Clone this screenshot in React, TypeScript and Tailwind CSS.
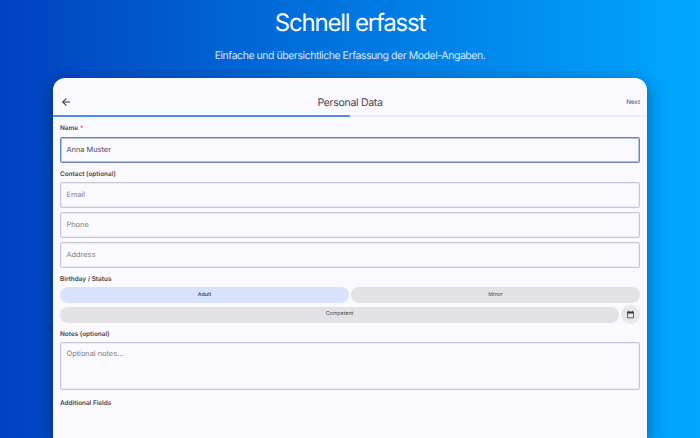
function FieldLabel({ children }: { children: React.ReactNode }) {
    return (
        <div className="h-[8px] pt-[1px] flex items-center text-[6.4px] leading-none font-semibold text-[#44464f]">
            {children}
        </div>
    );
}

function TextBox({ placeholder }: { placeholder: string }) {
    return (
        <div className="h-[26px] flex items-center px-[5.5px] rounded-[2px] border border-[#c8c8d0] shadow-[inset_0_0_0_1px_#ecebf1] text-[7.4px] text-[#7b7c85]">
            {placeholder}
        </div>
    );
}

export default function App() {
    return (
        <div className="h-[438px] w-[700px] overflow-hidden flex flex-col items-center bg-gradient-to-r from-[#0040c0] to-[#00a8ff] font-['Inter',sans-serif] antialiased [text-rendering:geometricPrecision]">
            <h1 className="mt-[8px] h-[30px] leading-[30px] text-[24px] font-normal tracking-[-1.2px] text-white">
                Schnell erfasst
            </h1>
            <p className="mt-[10px] h-[15px] leading-[15px] text-[10.5px] tracking-[-0.45px] text-[#d5e6fb]">
                Einfache und übersichtliche Erfassung der Model-Angaben.
            </p>
            <div className="mt-[15px] w-[594px] flex-1 rounded-t-[12px] bg-[#faf9ff] shadow-[0_4px_16px_rgba(0,0,0,0.4)]">
                <div className="h-[37px] flex items-center justify-between px-[7px] pt-[11px]">
                    <div className="w-[40px]">
                        <svg viewBox="0 0 24 24" className="h-[12px] w-[12px]" fill="#33343a">
                            <path d="M20 11H7.83l5.59-5.59L12 4l-8 8 8 8 1.41-1.41L7.83 13H20v-2z" />
                        </svg>
                    </div>
                    <span className="pt-[1px] text-[10.5px] tracking-[-0.3px] text-[#44464f]">Personal Data</span>
                    <span className="w-[40px] pt-[1px] text-right text-[6.2px] font-medium text-[#55658f]">Next</span>
                </div>
                <div className="h-[2px] bg-[#eeedf3]">
                    <div className="h-full w-1/2 bg-[#4a90ec]" />
                </div>
                <div className="px-[7px] pt-[7px] flex flex-col">
                    <FieldLabel>
                        Name <span className="ml-[2px] text-[#e05a5a]">*</span>
                    </FieldLabel>
                    <div className="mt-[5px] h-[26px] flex items-center px-[5.5px] rounded-[2px] border border-[#6f86b8] shadow-[inset_0_0_0_1px_#b4c0dc] text-[7.4px] text-[#44464f]">
                        Anna Muster
                    </div>
                    <div className="mt-[7px]">
                        <FieldLabel>Contact (optional)</FieldLabel>
                    </div>
                    <div className="mt-[4px] flex flex-col gap-[4px]">
                        <TextBox placeholder="Email" />
                        <TextBox placeholder="Phone" />
                        <TextBox placeholder="Address" />
                    </div>
                    <div className="mt-[7px]">
                        <FieldLabel>Birthday / Status</FieldLabel>
                    </div>
                    <div className="mt-[4px] flex gap-[2px]">
                        <div className="flex-1 h-[16px] pt-[2px] rounded-full bg-[#d8e2fc] flex items-center justify-center text-[5.3px] font-medium text-[#2a3a66]">
                            Adult
                        </div>
                        <div className="flex-1 h-[16px] pt-[2px] rounded-full bg-[#e2e2e6] flex items-center justify-center text-[5.3px] text-[#44464f]">
                            Minor
                        </div>
                    </div>
                    <div className="mt-[2px] flex items-center gap-[2px]">
                        <div className="flex-1 h-[16px] pt-[1px] rounded-full bg-[#e2e2e6] flex items-center justify-center text-[5.3px] text-[#44464f]">
                            Competent
                        </div>
                        <div className="h-[19px] w-[19px] rounded-full bg-[#e8e8ec] flex items-center justify-center">
                            <svg viewBox="0 0 24 24" className="h-[9px] w-[9px]" fill="#33343a">
                                <path d="M19 4h-1V2h-2v2H8V2H6v2H5a2 2 0 0 0-2 2v14a2 2 0 0 0 2 2h14a2 2 0 0 0 2-2V6a2 2 0 0 0-2-2zm0 16H5V9h14v11z" />
                            </svg>
                        </div>
                    </div>
                    <div className="mt-[6px]">
                        <FieldLabel>Notes (optional)</FieldLabel>
                    </div>
                    <div className="mt-[4px] h-[48px] px-[5.5px] pt-[5px] rounded-[2px] border border-[#c8c8d0] shadow-[inset_0_0_0_1px_#ecebf1] text-[7.4px] leading-[12px] text-[#7b7c85]">
                        Optional notes...
                    </div>
                    <div className="mt-[9px]">
                        <FieldLabel>Additional Fields</FieldLabel>
                    </div>
                </div>
            </div>
        </div>
    );
}
